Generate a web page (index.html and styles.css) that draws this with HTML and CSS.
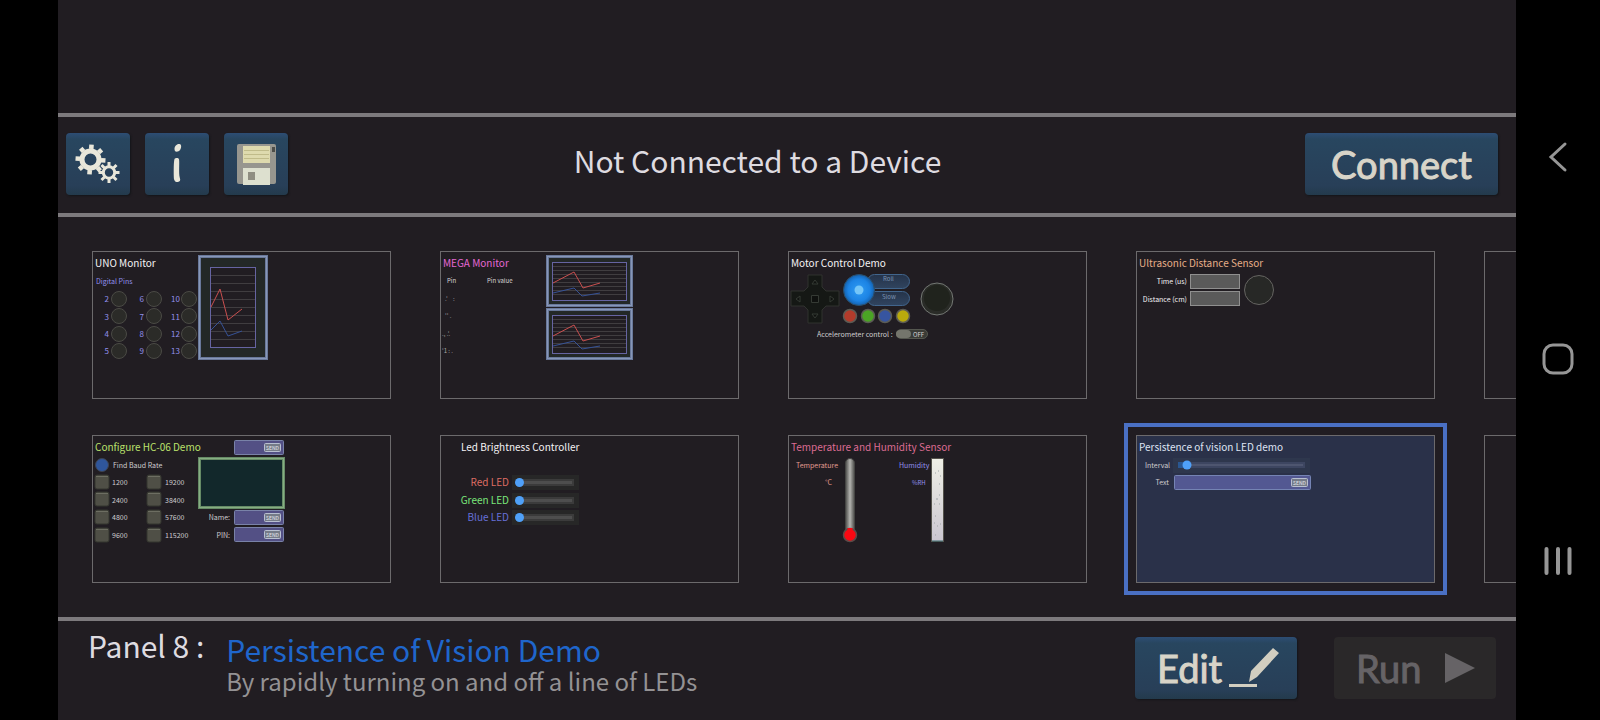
FILE: index.html
```html
<!DOCTYPE html>
<html lang="en">
<head>
<meta charset="utf-8">
<meta name="viewport" content="width=device-width, initial-scale=1">
<title>Panels</title>
<link rel="stylesheet" href="styles.css">
</head>
<body>
<svg class="defs" width="0" height="0" aria-hidden="true">
  <defs>
    <radialGradient id="ball"><stop offset="0" stop-color="#2f9cf4"/><stop offset="0.7" stop-color="#1c83e4"/><stop offset="1" stop-color="#1461ae"/></radialGradient>
    <linearGradient id="tube"><stop offset="0" stop-color="#4a4a48"/><stop offset="0.5" stop-color="#b4b4b0"/><stop offset="1" stop-color="#4a4a48"/></linearGradient>
    <linearGradient id="fog" x1="0" y1="0" x2="0" y2="1"><stop offset="0" stop-color="#efefe6"/><stop offset="1" stop-color="#cbc6d0"/></linearGradient>
    <linearGradient id="pill" x1="0" y1="0" x2="0" y2="1"><stop offset="0" stop-color="#253349"/><stop offset="1" stop-color="#30445f"/></linearGradient>
    <g id="lamp"><circle r="7.5" fill="#2b2b28" stroke="#4a4a45"/></g>
    <g id="key"><rect width="14" height="14" rx="2" fill="#4f4f46" stroke="#35372f"/><path d="M1 1.5h12" stroke="#6d6e62"/></g>
    <g id="slider"><rect width="67" height="15" fill="#272727"/><rect x="4" y="4" width="58" height="7" fill="#3b3b3b"/><rect x="6" y="6" width="54" height="3" fill="#4e4e4e"/><circle cx="7.500" cy="7.500" r="4.500" fill="#4fa0f8"/></g>
    <g id="chart"><rect x="1.500" y="1.500" width="84" height="49" fill="#232827" stroke="#69789a" stroke-width="3"/><rect x="1.500" y="1.500" width="84" height="49" fill="none" stroke="#8797b8"/><rect x="6.500" y="7.500" width="74" height="38" fill="#211d22" stroke="#6664a2"/><path d="M7 11.500h73M7 15.500h73M7 19.500h73M7 23.500h73M7 27.500h73M7 31.500h73M7 35.500h73M7 39.500h73" stroke="#403d40"/><path d="M7 28l21-11 9 16 17-5" fill="none" stroke="#c94f4f"/><path d="M7 38l21-5 8 8 18-3" fill="none" stroke="#365296"/></g>
    <g id="send"><rect x=".5" y=".5" width="16" height="8" rx="1" fill="#757b88" stroke="#b8bfd0"/><text x="8.500" y="7" class="send">SEND</text></g>
    <g id="field"><rect x=".5" y=".5" width="49" height="14" rx="1" fill="#535085" stroke="#7982a8"/><use href="#send" x="30" y="3"/></g>
  </defs>
</svg>
<div class="screen">
  <main class="app">
    <header class="bar">
      <div class="tools">
        <button class="btn square" type="button" aria-label="Settings">
          <svg width="64" height="62" viewBox="0 0 64 62" fill="none" stroke="#e9e7da">
            <circle cx="24.500" cy="26.500" r="8.500" stroke-width="5"/>
            <g stroke-width="4.600"><path d="M24.500 16v-4.500M24.500 37v4.500M14 26.500H9.500M35 26.500h4.500M17 19l-3-3M32 34l3 3M17 34l-3 3M32 19l3-3" transform="rotate(4 24.500 26.500)"/></g>
            <circle cx="43" cy="39.500" r="5.700" stroke-width="3"/>
            <path d="M43 33v-4M43 46v4M36.500 39.500h-4M49.500 39.500h4M38.500 35l-3-3M47.500 44l3 3M38.500 44l-3 3M47.500 35l3-3" stroke-width="3"/>
          </svg>
        </button>
        <button class="btn square" type="button" aria-label="Information">
          <svg width="64" height="62" viewBox="0 0 64 62" fill="#e9e7da">
            <path d="M29.500 16c0-3 2.500-5.500 5-5 2.300.5 2 4 .5 6-1.500 2-5.500 3-5.500-1zM29.500 26c1-1.300 4-1.500 4.500.2.700 3-.5 14 .8 18.500 1 2.500.2 4-2 4.300-3 .2-4-2-4-5 0-5-.3-15 .7-18z"/>
          </svg>
        </button>
        <button class="btn square" type="button" aria-label="Save">
          <svg width="64" height="62" viewBox="0 0 64 62">
            <rect x="13" y="11" width="39" height="40" rx="2" fill="#97968f"/>
            <rect x="19" y="13" width="27" height="17" fill="#dedaae"/>
            <path d="M20 17.500h25M20 21.500h25M20 25.500h25" stroke="#c0bb8a"/>
            <rect x="19" y="35" width="27" height="17" fill="#dde0cf"/>
            <rect x="24" y="39" width="7" height="8" fill="#8f8e82"/>
            <rect x="48" y="14" width="3" height="5" fill="#4d4d49"/>
          </svg>
        </button>
      </div>
      <h1 class="status">Not Connected to a Device</h1>
      <button class="btn connect" type="button">Connect</button>
    </header>

    <section class="gallery" aria-label="Panels">
      <button class="card" type="button">
        <span class="name">UNO Monitor</span>
        <svg class="art" viewBox="1 1 297 146">
          <text x="4" y="33" class="lilac">Digital Pins</text>
          <g class="lilac digits end">
            <text x="17" y="51">2</text><text x="17" y="69">3</text><text x="17" y="86">4</text><text x="17" y="103">5</text>
            <text x="52" y="51">6</text><text x="52" y="69">7</text><text x="52" y="86">8</text><text x="52" y="103">9</text>
            <text x="88" y="51">10</text><text x="88" y="69">11</text><text x="88" y="86">12</text><text x="88" y="103">13</text>
          </g>
          <use href="#lamp" x="27" y="48"/><use href="#lamp" x="27" y="65"/><use href="#lamp" x="27" y="83"/><use href="#lamp" x="27" y="100"/>
          <use href="#lamp" x="62" y="48"/><use href="#lamp" x="62" y="65"/><use href="#lamp" x="62" y="83"/><use href="#lamp" x="62" y="100"/>
          <use href="#lamp" x="97" y="48"/><use href="#lamp" x="97" y="65"/><use href="#lamp" x="97" y="83"/><use href="#lamp" x="97" y="100"/>
          <rect x="107.500" y="5.500" width="67" height="102" fill="#232827" stroke="#69789a" stroke-width="3"/>
          <rect x="107.500" y="5.500" width="67" height="102" fill="none" stroke="#8797b8"/>
          <rect x="118.500" y="16.500" width="45" height="80" fill="#211d22" stroke="#6664a2"/>
          <path d="M119 24.500h44M119 32.500h44M119 40.500h44M119 48.500h44M119 56.500h44M119 64.500h44M119 72.500h44M119 80.500h44M119 88.500h44" stroke="#403d40"/>
          <path d="M119 56l9-18 8 31 14-11" fill="none" stroke="#c94f4f"/>
          <path d="M119 79l9-9 8 15 14-5" fill="none" stroke="#365296"/>
        </svg>
      </button>
      <button class="card" type="button">
        <span class="name magenta">MEGA Monitor</span>
        <svg class="art" viewBox="1 1 297 146">
          <g class="tiny"><text x="7" y="32">Pin</text><text x="47" y="32">Pin value</text></g>
          <g class="tiny dim"><text x="5" y="50">.'</text><text x="13" y="50">:</text><text x="5" y="67">'' .</text><text x="2" y="85">., .'.</text><text x="2" y="102">'1 : .</text></g>
          <use href="#chart" x="106" y="4"/>
          <use href="#chart" x="106" y="57"/>
        </svg>
      </button>
      <button class="card" type="button">
        <span class="name">Motor Control Demo</span>
        <svg class="art" viewBox="1 1 297 146">
          <path d="M20 24h14v12l4 4h13v15H38l-4 4v13H20V59l-4-4H3V40h13l4-4z" fill="#151815" stroke="#30332f"/>
          <path d="M27 29l3 4h-6zM27 67l3-4h-6zM8 48l4-3v6zM46 48l-4-3v6zM23.500 44.500h7v7h-7z" fill="#0f110f" stroke="#353a34"/>
          <rect x="79.500" y="23.500" width="42" height="14" rx="7" fill="url(#pill)" stroke="#41658c"/>
          <rect x="79.500" y="40.500" width="42" height="14" rx="7" fill="url(#pill)" stroke="#41658c"/>
          <g class="tiny steel"><text x="95" y="30">Roll</text><text x="94" y="48">Slow</text></g>
          <circle cx="71" cy="39" r="15.500" fill="url(#ball)" stroke="#2b4f6c"/>
          <circle cx="71" cy="39" r="4.500" fill="#75c6f8"/>
          <g stroke="#5b5b54" stroke-width="1.500">
            <circle cx="62" cy="65" r="6.500" fill="#b23b2b"/><circle cx="80" cy="65" r="6.500" fill="#4ba425"/><circle cx="97" cy="65" r="6.500" fill="#3755a0"/><circle cx="115" cy="65" r="6.500" fill="#b9aa0c"/>
          </g>
          <circle cx="149" cy="48" r="16" fill="#2a2c28" stroke="#747874"/>
          <circle cx="149" cy="47" r="13" fill="#20231d"/>
          <text x="29" y="86" class="label">Accelerometer control :</text>
          <rect x="108.500" y="78.500" width="31" height="9" rx="4.500" fill="#3a3b36" stroke="#55574f"/>
          <rect x="108" y="79" width="15" height="8" rx="4" fill="#74756c"/>
          <text x="125" y="86" class="tiny">OFF</text>
        </svg>
      </button>
      <button class="card" type="button">
        <span class="name peach">Ultrasonic Distance Sensor</span>
        <svg class="art" viewBox="1 1 297 146">
          <g class="label white end"><text x="51" y="33">Time (us)</text><text x="51" y="51">Distance (cm)</text></g>
          <rect x="54.500" y="23.500" width="49" height="14" fill="#5a5a5a" stroke="#8f8f8f"/>
          <rect x="54.500" y="40.500" width="49" height="14" fill="#5a5a5a" stroke="#8f8f8f"/>
          <circle cx="123" cy="39" r="14.500" fill="#272826" stroke="#656461"/>
        </svg>
      </button>
      <button class="card" type="button" aria-label="Panel 9"></button>

      <button class="card" type="button">
        <span class="name lime">Configure HC-06 Demo</span>
        <svg class="art" viewBox="1 1 297 146">
          <use href="#field" x="142" y="5"/><use href="#field" x="142" y="75"/><use href="#field" x="142" y="92"/>
          <circle cx="10" cy="30" r="6.500" fill="#2f569c" stroke="#3e4350"/>
          <use href="#key" x="3" y="40"/><use href="#key" x="3" y="57"/><use href="#key" x="3" y="75"/><use href="#key" x="3" y="93"/>
          <use href="#key" x="55" y="40"/><use href="#key" x="55" y="57"/><use href="#key" x="55" y="75"/><use href="#key" x="55" y="93"/>
          <g class="label">
            <text x="21" y="33">Find Baud Rate</text>
            <text x="20" y="50">1200</text><text x="20" y="68">2400</text><text x="20" y="85">4800</text><text x="20" y="103">9600</text>
            <text x="73" y="50">19200</text><text x="73" y="68">38400</text><text x="73" y="85">57600</text><text x="73" y="103">115200</text>
          </g>
          <g class="label end"><text x="138" y="85">Name:</text><text x="138" y="103">PIN:</text></g>
          <rect x="107.500" y="23.500" width="84" height="49" fill="#12282b" stroke="#668b66" stroke-width="3"/>
          <rect x="107.500" y="23.500" width="84" height="49" fill="none" stroke="#86ad82"/>
        </svg>
      </button>
      <button class="card" type="button">
        <span class="name indent">Led Brightness Controller</span>
        <svg class="art" viewBox="1 1 297 146">
          <g class="large end"><text x="69" y="51" fill="#dc6c62">Red LED</text><text x="69" y="69" fill="#7ae67a">Green LED</text><text x="69" y="86" fill="#6670d8">Blue LED</text></g>
          <use href="#slider" x="72" y="40"/><use href="#slider" x="72" y="58"/><use href="#slider" x="72" y="75"/>
        </svg>
      </button>
      <button class="card" type="button">
        <span class="name rose">Temperature and Humidity Sensor</span>
        <svg class="art" viewBox="1 1 297 146">
          <g class="label salmon"><text x="8" y="33">Temperature</text><text x="37" y="50">°C</text></g>
          <g class="lilac"><text x="111" y="33">Humidity</text><text x="124" y="50" class="unit">%RH</text></g>
          <rect x="57.500" y="23.500" width="9" height="76" rx="4.500" fill="url(#tube)" stroke="#454543"/>
          <circle cx="62" cy="100" r="6.500" fill="#fa0812" stroke="#5b4a48" stroke-width="1.500"/>
          <path d="M62 93v5" stroke="#fa0812" stroke-width="5"/>
          <rect x="143.500" y="23.500" width="12" height="83" fill="url(#fog)" stroke="#55534c"/>
          <path d="M147 38h1M150 36h1M152 41h1M151 49h1M151 60h1M148 64h2M146 69h1M151 69h1M147 81h1M146 88h1M152 89h1M149 91h1M147 100h1" stroke="#9ea4a6"/>
          <path d="M144 106h11" stroke="#3b6a70"/>
        </svg>
      </button>
      <button class="card selected" type="button" aria-pressed="true">
        <span class="name">Persistence of vision LED demo</span>
        <svg class="art" viewBox="1 1 297 146">
          <text x="9" y="33" class="label">Interval</text>
          <text x="33" y="50" class="label end">Text</text>
          <rect x="37" y="23" width="137" height="15" fill="#2e374d"/>
          <rect x="42" y="27" width="127" height="6" fill="#3d4661"/>
          <rect x="44" y="29" width="123" height="2" fill="#4e5670"/>
          <path d="M42 30h8" stroke="#2a5791" stroke-width="6"/>
          <circle cx="51" cy="30" r="4.500" fill="#4fa0f8"/>
          <rect x="38.500" y="40.500" width="136" height="14" rx="1" fill="#535892" stroke="#7584b4"/>
          <use href="#send" x="155" y="43"/>
        </svg>
      </button>
      <button class="card" type="button" aria-label="Panel 10"></button>
    </section>

    <footer class="bar foot">
      <p class="index">Panel 8 :</p>
      <div class="info">
        <h2 class="title">Persistence of Vision Demo</h2>
        <p class="desc">By rapidly turning on and off a line of LEDs</p>
      </div>
      <div class="actions">
        <button class="btn action" type="button">Edit
          <svg width="52" height="42" viewBox="0 0 52 42" fill="#d2cec0"><path d="M0 37h28v3H0zM20 35l2-11L44 1l6 5-22 24z"/></svg>
        </button>
        <button class="btn action" type="button" disabled>Run
          <svg width="32" height="32" viewBox="0 0 32 32" fill="#666366"><path d="M1 1l30 15L1 31z"/></svg>
        </button>
      </div>
    </footer>
  </main>

  <nav class="system" aria-label="System">
    <button type="button" aria-label="Back"><svg width="32" height="32" viewBox="0 0 32 32"><path d="M23 3L9 16l14 13"/></svg></button>
    <button type="button" aria-label="Home"><svg width="32" height="32" viewBox="0 0 32 32"><rect x="2" y="2" width="28" height="28" rx="9"/></svg></button>
    <button type="button" aria-label="Recents"><svg width="32" height="32" viewBox="0 0 32 32"><path d="M4.500 4v24M16 4v24M27.500 4v24" stroke-width="4"/></svg></button>
  </nav>
</div>
</body>
</html>
```
FILE: styles.css
```css
* { box-sizing: border-box; }

body {
  margin: 0;
  background: #000;
  color: #dedbe0;
  font-family: "Noto Sans CJK SC", "Noto Sans", sans-serif;
}

h1, h2, p { margin: 0; font-weight: 400; }

button {
  margin: 0;
  padding: 0;
  border: 0;
  background: none;
  color: inherit;
  font: inherit;
  cursor: pointer;
}

.defs { position: absolute; }

.screen {
  display: flex;
  min-height: 100vh;
  padding-left: 58px;
}

.app {
  display: flex;
  flex: 1;
  flex-direction: column;
  min-width: 0;
  padding-top: 113px;
  background: #211d22;
}

.bar {
  display: flex;
  align-items: center;
  padding: 16px 18px 18px 8px;
  border-top: 4px solid #7d7a7d;
}

.tools { display: flex; gap: 15px; }

.status {
  flex: 1;
  padding: 0 78px 8px 0;
  font-size: 30px;
  line-height: 40px;
  text-align: center;
}

.btn {
  height: 62px;
  border-radius: 4px;
  background: linear-gradient(#2d4d74, #28465f 10%, #283f58 85%, #233a4c);
  box-shadow: 1px 1px 2px #131519;
  color: #d8d4c8;
  font-family: Lato, "Open Sans", sans-serif;
}

.square { width: 64px; }
.square svg { display: block; }

.connect,
.action {
  font-size: 38px;
  -webkit-text-stroke: 1px currentColor;
}

.connect { width: 193px; }

.gallery {
  display: grid;
  grid-template-columns: repeat(5, 299px);
  grid-auto-rows: 148px;
  gap: 36px 49px;
  padding: 34px;
  border-top: 4px solid #7d7a7d;
  overflow: hidden;
}

.card {
  position: relative;
  display: flex;
  align-items: flex-start;
  padding: 3px 2px;
  border: 1px solid #6c6a6c;
  color: #f4f2f4;
  text-align: left;
}

.selected {
  background: #2a3149;
  color: #dfe4f4;
  outline: 4px solid #4a70c4;
  outline-offset: 8px;
}

.name {
  font-size: 10px;
  line-height: 16px;
  white-space: nowrap;
}

.art {
  position: absolute;
  inset: 0;
  width: 100%;
  height: 100%;
  font-size: 7px;
}

.indent { padding-left: 18px; }
.magenta { color: #e468d4; }
.peach { color: #e6ae88; }
.lime { color: #bce26c; }
.rose { color: #dc6c92; }

.lilac { fill: #9290ec; }
.digits { font-size: 8px; }
.label { fill: #cfcdcf; }
.white { fill: #f4f2f4; }
.salmon { fill: #e29c90; }
.large { font-size: 10px; }
.tiny { font-size: 6px; fill: #d6d4d6; }
.steel { fill: #7d95b2; }
.dim { fill: #a8a6a8; }
.unit { font-size: 6px; }
.end { text-anchor: end; }
.send { font-size: 5px; fill: #e6e8f0; text-anchor: middle; }

.foot {
  flex: 1;
  align-items: flex-start;
  gap: 22px;
  padding: 4px 20px 16px 30px;
}

.index { font-size: 30px; line-height: 40px; }
.info { flex: 1; padding-top: 4px; }
.title { color: #1f66cc; font-size: 30px; line-height: 40px; }
.desc { color: #949294; font-size: 24px; line-height: 24px; }

.actions { display: flex; gap: 37px; padding-top: 12px; }

.action {
  display: flex;
  align-items: center;
  justify-content: space-between;
  width: 162px;
  padding: 0 16px 0 22px;
}

.action:disabled {
  padding-right: 20px;
  background: #2a2829;
  box-shadow: none;
  color: #666366;
  cursor: default;
}

.system {
  display: flex;
  flex-direction: column;
  justify-content: space-between;
  width: 84px;
  padding: 125px 0 127px;
}

.system button {
  display: grid;
  place-items: center;
  height: 64px;
}

.system svg {
  fill: none;
  stroke: #969696;
  stroke-width: 3;
  stroke-linecap: round;
}
```
